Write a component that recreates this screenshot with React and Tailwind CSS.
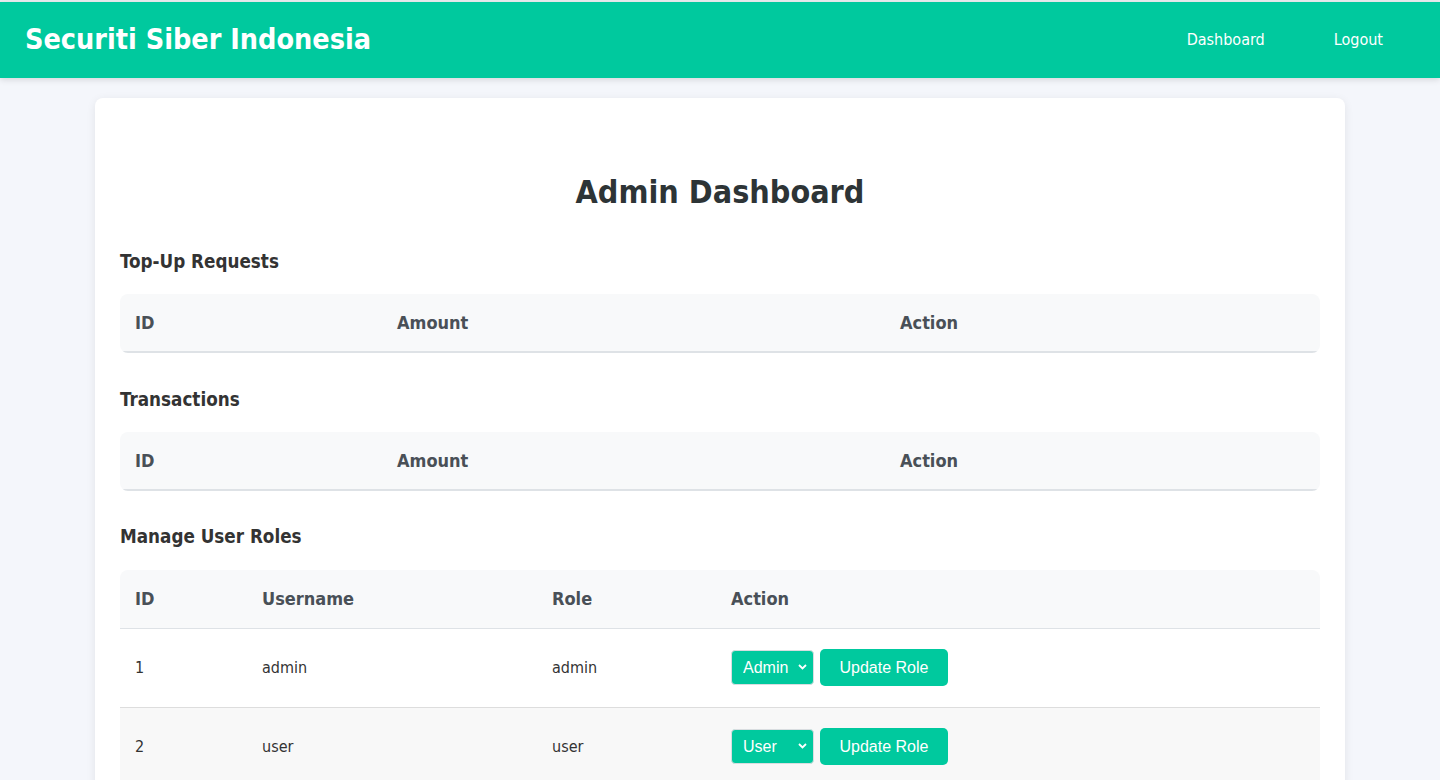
import React from "react";

const font = { fontFamily: "'DejaVu Sans Condensed', 'DejaVu Sans', sans-serif" };

const EmptyTable = ({ title, mt }) => (
  <div>
    <h2 className={`text-[18.7px] font-bold text-[#333] leading-[22px] mb-[21px] ${mt}`}>
      {title}
    </h2>
    <div className="rounded-lg overflow-hidden">
      <table className="w-full border-collapse text-left">
        <thead>
          <tr className="bg-[#f8f9fa] text-[#495057]">
            <th className="w-[262px] h-[58px] px-[15px] font-bold text-[18px] border-b-2 border-[#dee2e6]">
              ID
            </th>
            <th className="w-[503px] px-[15px] font-bold text-[18px] border-b-2 border-[#dee2e6]">
              Amount
            </th>
            <th className="px-[15px] font-bold text-[18px] border-b-2 border-[#dee2e6]">
              Action
            </th>
          </tr>
        </thead>
        <tbody></tbody>
      </table>
    </div>
  </div>
);

const users = [
  { id: 1, username: "admin", role: "admin", option: "Admin" },
  { id: 2, username: "user", role: "user", option: "User" },
];

export default function App() {
  return (
    <div className="min-h-screen bg-[#f4f6fb] border-t-2 border-[#e9ecef]" style={font}>
      <nav className="h-[76px] bg-[#00c99e] flex items-center justify-between pl-[25px] pr-[57px] shadow-[0_2px_6px_rgba(0,0,0,0.12)]">
        <h1 className="text-white font-bold text-[28.5px]">Securiti Siber Indonesia</h1>
        <div className="flex items-center gap-[69px] text-white text-[16px]">
          <a className="cursor-pointer">Dashboard</a>
          <a className="cursor-pointer">Logout</a>
        </div>
      </nav>

      <div className="w-[1250px] mx-auto mt-[20px] bg-white rounded-lg shadow-[0_2px_10px_rgba(0,0,0,0.08)] px-[25px] pt-[75px] pb-[20px]">
        <h1 className="text-center text-[32px] font-bold text-[#2d3436] leading-[38px]">
          Admin Dashboard
        </h1>

        <EmptyTable title="Top-Up Requests" mt="mt-[40px]" />
        <EmptyTable title="Transactions" mt="mt-[36px]" />

        <h2 className="text-[18.7px] font-bold text-[#333] leading-[22px] mt-[35px] mb-[22px]">
          Manage User Roles
        </h2>
        <div className="rounded-lg overflow-hidden">
          <table className="w-full border-collapse text-left">
            <thead>
              <tr className="bg-[#f8f9fa] text-[#495057]">
                <th className="w-[127px] h-[58px] px-[15px] font-bold text-[18px] border-b border-[#dee2e6]">ID</th>
                <th className="w-[290px] px-[15px] font-bold text-[18px] border-b border-[#dee2e6]">Username</th>
                <th className="w-[179px] px-[15px] font-bold text-[18px] border-b border-[#dee2e6]">Role</th>
                <th className="px-[15px] font-bold text-[18px] border-b border-[#dee2e6]">Action</th>
              </tr>
            </thead>
            <tbody>
              {users.map((u, i) => (
                <tr
                  key={u.id}
                  className={`${i % 2 === 1 ? "bg-[#f8f8f8]" : "bg-white"} border-b border-[#dddddd] text-[16px] text-[#333]`}
                >
                  <td className="h-[79px] px-[15px]">{u.id}</td>
                  <td className="px-[15px]">{u.username}</td>
                  <td className="px-[15px]">{u.role}</td>
                  <td className="px-[15px]">
                    <div className="flex items-center gap-[6px]" style={{ fontFamily: "'Liberation Sans', Arial, sans-serif" }}>
                      <div className="relative w-[83px] h-[35px]">
                        <select
                          defaultValue={u.option}
                          className="appearance-none w-full h-full bg-[#00c99e] text-white text-[16px] pl-[11px] rounded-[4px] border border-[#d9dde0] outline-none"
                        >
                          <option>Admin</option>
                          <option>User</option>
                        </select>
                        <svg
                          className="absolute right-[7px] top-[14px] pointer-events-none"
                          width="9"
                          height="6"
                          viewBox="0 0 9 6"
                          fill="none"
                        >
                          <path d="M1 1l3.5 3.5L8 1" stroke="white" strokeWidth="1.8" />
                        </svg>
                      </div>
                      <button className="w-[128px] h-[37px] bg-[#00c99e] text-white text-[16px] rounded-[5px]">
                        Update Role
                      </button>
                    </div>
                  </td>
                </tr>
              ))}
            </tbody>
          </table>
        </div>
      </div>
    </div>
  );
}
